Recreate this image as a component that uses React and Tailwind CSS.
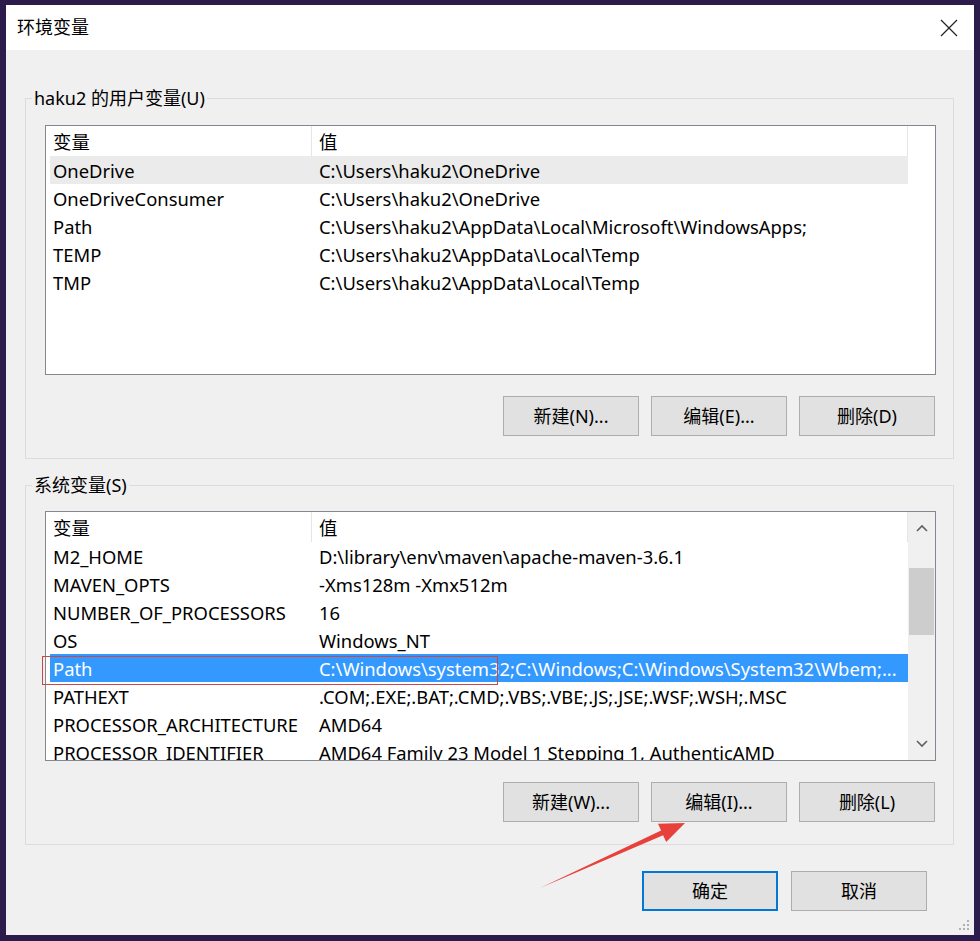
import React from 'react';

const userVars = [
  ['OneDrive', 'C:\\Users\\haku2\\OneDrive'],
  ['OneDriveConsumer', 'C:\\Users\\haku2\\OneDrive'],
  ['Path', 'C:\\Users\\haku2\\AppData\\Local\\Microsoft\\WindowsApps;'],
  ['TEMP', 'C:\\Users\\haku2\\AppData\\Local\\Temp'],
  ['TMP', 'C:\\Users\\haku2\\AppData\\Local\\Temp'],
];

const sysVars = [
  ['M2_HOME', 'D:\\library\\env\\maven\\apache-maven-3.6.1'],
  ['MAVEN_OPTS', '-Xms128m -Xmx512m'],
  ['NUMBER_OF_PROCESSORS', '16'],
  ['OS', 'Windows_NT'],
  ['Path', 'C:\\Windows\\system32;C:\\Windows;C:\\Windows\\System32\\Wbem;...'],
  ['PATHEXT', '.COM;.EXE;.BAT;.CMD;.VBS;.VBE;.JS;.JSE;.WSF;.WSH;.MSC'],
  ['PROCESSOR_ARCHITECTURE', 'AMD64'],
  ['PROCESSOR_IDENTIFIER', 'AMD64 Family 23 Model 1 Stepping 1, AuthenticAMD'],
];

const Btn = ({ children, primary }) => (
  <button
    className={
      primary
        ? 'w-[136px] h-[40px] bg-[#e1e1e1] border-2 border-[#0078d7] text-[18px] text-black'
        : 'w-[136px] h-[40px] bg-[#e1e1e1] border border-[#adadad] text-[18px] text-black'
    }
  >
    {children}
  </button>
);

const ListView = ({ rows, hoverIdx, selIdx, scroll }) => (
  <div className="h-[250px] border border-[#828790] bg-white flex overflow-hidden">
    <div className="flex-1 pl-[4px] overflow-hidden">
      {/* header */}
      <div className="w-[858px] h-[30px] flex items-stretch">
        <div className="w-[262px] pl-[3px] pt-[2px] flex items-center border-r border-[#e5e5e5]">变量</div>
        <div className="flex-1 pl-[7px] pt-[2px] flex items-center border-r border-[#e5e5e5]">值</div>
      </div>
      {rows.map(([k, v], i) => (
        <div
          key={k + i}
          className={
            i === selIdx
              ? 'w-[858px] h-[28px] pt-[2px] flex items-center bg-[#3399ff] text-white'
              : i === hoverIdx
              ? 'w-[858px] h-[28px] pt-[2px] flex items-center bg-[#ebebeb]'
              : 'w-[858px] h-[28px] pt-[2px] flex items-center'
          }
        >
          <div className="w-[262px] pl-[3px] whitespace-nowrap">{k}</div>
          <div className="flex-1 pl-[7px] whitespace-nowrap">{v}</div>
        </div>
      ))}
    </div>
    {scroll && (
      <div className="w-[27px] bg-[#f0f0f0] flex flex-col items-center">
        <div className="h-[32px] w-full flex items-center justify-center">
          <svg width="12" height="8" viewBox="0 0 12 8">
            <path d="M1 7 L6 2 L11 7" fill="none" stroke="#606060" strokeWidth="1.6" />
          </svg>
        </div>
        <div className="mt-[24px] h-[67px] w-[25px] bg-[#cdcdcd]" />
        <div className="flex-1" />
        <div className="h-[32px] w-full flex items-center justify-center">
          <svg width="12" height="8" viewBox="0 0 12 8">
            <path d="M1 1 L6 6 L11 1" fill="none" stroke="#606060" strokeWidth="1.6" />
          </svg>
        </div>
      </div>
    )}
  </div>
);

export default function App() {
  return (
    <div className="relative w-[980px] h-[941px] bg-[#2b1c4c] pt-[5px] px-[6px] pb-[6px] flex flex-col font-['Noto_Sans','Noto_Sans_CJK_SC',sans-serif] text-[18.4px] text-black">
      {/* Title bar */}
      <div className="h-[45px] bg-white flex items-center justify-between pl-[11px] pr-[16px]">
        <span className="text-[18px]">环境变量</span>
        <svg width="18" height="18" viewBox="0 0 18 18">
          <path d="M1 1 L17 17 M17 1 L1 17" stroke="#222" strokeWidth="1.2" />
        </svg>
      </div>

      {/* Body */}
      <div className="relative flex-1 bg-[#f0f0f0] pt-[36px] pl-[19px] pr-[20px] flex flex-col">
        <fieldset className="border border-[#dcdcdc]">
          <legend className="ml-[6px] px-[2px] leading-[24px] text-[18px]">haku2 的用户变量(U)</legend>
          <div className="pt-[15px] pl-[19px] pr-[17px] pb-[22px]">
            <ListView rows={userVars} hoverIdx={0} />
            <div className="mt-[21px] pr-[1px] flex justify-end gap-[12px]">
              <Btn>新建(N)...</Btn>
              <Btn>编辑(E)...</Btn>
              <Btn>删除(D)</Btn>
            </div>
          </div>
        </fieldset>

        <fieldset className="mt-[14px] border border-[#dcdcdc]">
          <legend className="ml-[6px] px-[2px] leading-[24px] text-[18px]">系统变量(S)</legend>
          <div className="pt-[14px] pl-[19px] pr-[17px] pb-[22px]">
            <ListView rows={sysVars} selIdx={4} scroll />
            <div className="mt-[21px] pr-[1px] flex justify-end gap-[12px]">
              <Btn>新建(W)...</Btn>
              <Btn>编辑(I)...</Btn>
              <Btn>删除(L)</Btn>
            </div>
          </div>
        </fieldset>

        <div className="mt-[26px] pr-[27px] flex justify-end gap-[13px]">
          <Btn primary>确定</Btn>
          <Btn>取消</Btn>
        </div>

        {/* resize grip */}
        <svg className="absolute right-[4px] bottom-[4px]" width="12" height="12" viewBox="0 0 12 12">
          <rect x="9" y="1" width="2" height="2" fill="#b0b0b0" />
          <rect x="5" y="5" width="2" height="2" fill="#b0b0b0" />
          <rect x="9" y="5" width="2" height="2" fill="#b0b0b0" />
          <rect x="1" y="9" width="2" height="2" fill="#b0b0b0" />
          <rect x="5" y="9" width="2" height="2" fill="#b0b0b0" />
          <rect x="9" y="9" width="2" height="2" fill="#b0b0b0" />
        </svg>
      </div>

      {/* annotation: red box around Path row */}
      <div className="absolute left-[42px] top-[656px] w-[456px] h-[29px] border border-[#c8474a]" />

      {/* annotation: red arrow */}
      <svg className="absolute left-0 top-0 pointer-events-none" width="980" height="941" viewBox="0 0 980 941">
        <polygon
          points="540,888 661.1,830.6 658,823.8 685,823 666.2,842 663.1,835.2"
          fill="#e8403a"
        />
      </svg>
    </div>
  );
}
